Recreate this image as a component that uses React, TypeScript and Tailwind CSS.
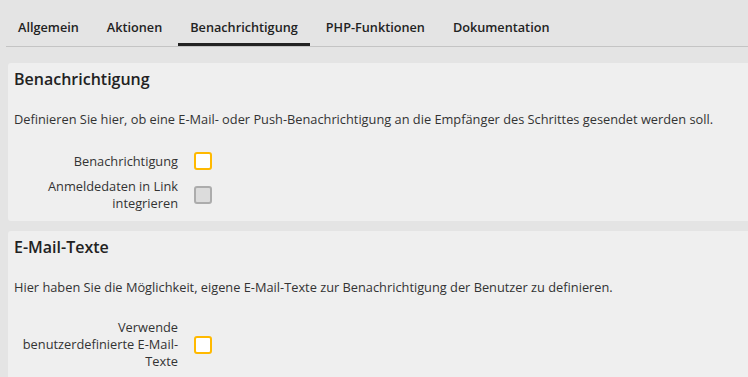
import React from "react";

const tabs = ["Allgemein", "Aktionen", "Benachrichtigung", "PHP-Funktionen", "Dokumentation"];

function Checkbox({ active }: { active?: boolean }) {
  return active ? (
    <div className="w-[18px] h-[18px] shrink-0 rounded-[3px] border-2 border-[#ffb900] bg-white" />
  ) : (
    <div className="w-[18px] h-[18px] shrink-0 rounded-[3px] border-2 border-[#acacac] bg-[#dcdcdc]" />
  );
}

function Row({ label, active }: { label: React.ReactNode; active?: boolean }) {
  return (
    <div className="flex items-center">
      <div className="w-[160px] ml-[10px] text-right text-[12.8px] leading-[17px] text-[#333]">{label}</div>
      <div className="ml-[16px]">
        <Checkbox active={active} />
      </div>
    </div>
  );
}

export default function App() {
  return (
    <div
      className="w-[748px] h-[377px] overflow-hidden bg-[#e4e4e4] text-[#333]"
      style={{ fontFamily: '"Open Sans", sans-serif' }}
    >
      <div className="pt-[17px] pl-[6px]">
        <div className="flex gap-[4px] border-b border-[#c4c4c4]">
          {tabs.map((t) => (
            <div
              key={t}
              className={
                "px-[12px] pb-[6px] text-[12.7px] leading-[20px] font-semibold text-[#222] border-b-[3px] " +
                (t === "Benachrichtigung" ? "border-[#222]" : "border-transparent")
              }
            >
              {t}
            </div>
          ))}
        </div>
      </div>
      <div className="pl-[8px] pt-[16px] flex flex-col gap-[10px]">
        <div className="bg-[#efefef] rounded-l-[3px] pt-[5px] pb-[9px]">
          <div className="px-[6px] text-[16px] leading-[22px] font-semibold text-[#222]">Benachrichtigung</div>
          <div className="px-[6px] mt-[21px] text-[12.8px] leading-[17px]">
            Definieren Sie hier, ob eine E-Mail- oder Push-Benachrichtigung an die Empfänger des Schrittes gesendet werden soll.
          </div>
          <div className="mt-[24px] flex flex-col gap-[8px]">
            <Row label="Benachrichtigung" active />
            <Row label="Anmeldedaten in Link integrieren" />
          </div>
        </div>
        <div className="bg-[#efefef] rounded-l-[3px] pt-[5px] pb-[9px]">
          <div className="px-[6px] text-[16px] leading-[22px] font-semibold text-[#222]">E-Mail-Texte</div>
          <div className="px-[6px] mt-[21px] text-[12.8px] leading-[17px]">
            Hier haben Sie die Möglichkeit, eigene E-Mail-Texte zur Benachrichtigung der Benutzer zu definieren.
          </div>
          <div className="mt-[23px] flex flex-col gap-[8px]">
            <Row label="Verwende benutzerdefinierte E-Mail-Texte" active />
          </div>
        </div>
      </div>
    </div>
  );
}
